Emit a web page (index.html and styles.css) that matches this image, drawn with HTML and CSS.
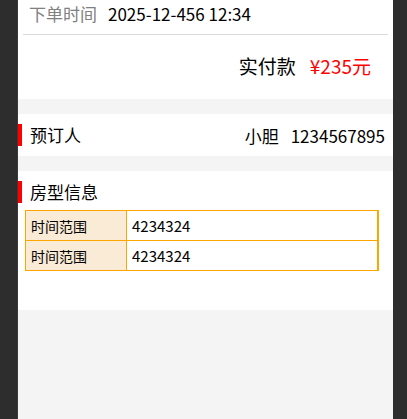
FILE: index.html
```html
<!DOCTYPE html>
<html lang="zh">
<head>
<meta charset="utf-8">
<link rel="stylesheet" href="styles.css">
</head>
<body>
<div class="page">
  <section class="card">
    <div class="time-row">
      <span class="time-label">下单时间</span>
      <span class="time-value">2025-12-456 12:34</span>
    </div>
    <div class="pay-row">
      <span class="pay-label">实付款</span>
      <span class="pay-value">¥235元</span>
    </div>
  </section>
  <section class="card booker">
    <div class="title">预订人</div>
    <div class="booker-info"><span>小胆</span><span>1234567895</span></div>
  </section>
  <section class="card room">
    <div class="title">房型信息</div>
    <table class="room-table">
      <tr><td class="label">时间范围</td><td class="value">4234324</td></tr>
      <tr><td class="label">时间范围</td><td class="value">4234324</td></tr>
    </table>
  </section>
</div>
</body>
</html>
```
FILE: styles.css
```css
html, body {
  margin: 0;
  padding: 0;
  height: 100%;
}
body {
  background: #2d2d2d;
  font-family: "Noto Sans CJK SC", "Noto Sans", sans-serif;
  color: #000;
}
.page {
  width: 375px;
  min-height: 100%;
  margin-left: 18px;
  background: #f4f4f4;
  box-shadow: -1px 0 0 #3a3a3a;
}
.card {
  background: #fff;
}
.card + .card {
  margin-top: 15px;
}
.time-row {
  margin: 0 5px;
  height: 35px;
  box-sizing: border-box;
  padding: 0 0 7px 6px;
  border-bottom: 1px solid #d9d9d9;
  display: flex;
  align-items: center;
  gap: 11px;
  font-size: 17px;
}
.time-label {
  color: #808080;
}
.pay-row {
  height: 64px;
  display: flex;
  justify-content: flex-end;
  align-items: center;
  gap: 14px;
  padding: 0 22px 4px 0;
  box-sizing: border-box;
  font-size: 19px;
}
.pay-value {
  color: #ff0000;
}
.title {
  font-size: 17px;
  line-height: 22px;
  padding-left: 8px;
  border-left: 4px solid #ff0000;
}
.booker {
  height: 42px;
  display: flex;
  align-items: center;
  justify-content: space-between;
  padding-right: 8px;
}
.booker-info {
  display: flex;
  gap: 12px;
  font-size: 17px;
}
.room {
  padding-top: 10px;
  height: 139px;
  box-sizing: border-box;
}
.room-table {
  margin: 7px 0 0 7px;
  width: 354px;
  border-collapse: collapse;
}
.room-table td {
  border: 1px solid #ffa500;
  height: 30px;
  padding: 0 0 0 5px;
  box-sizing: border-box;
}
.room-table .label {
  width: 101px;
  background: #faebd7;
  font-size: 14px;
}
.room-table .value {
  font-size: 15px;
  border-right-width: 2px;
}
```
